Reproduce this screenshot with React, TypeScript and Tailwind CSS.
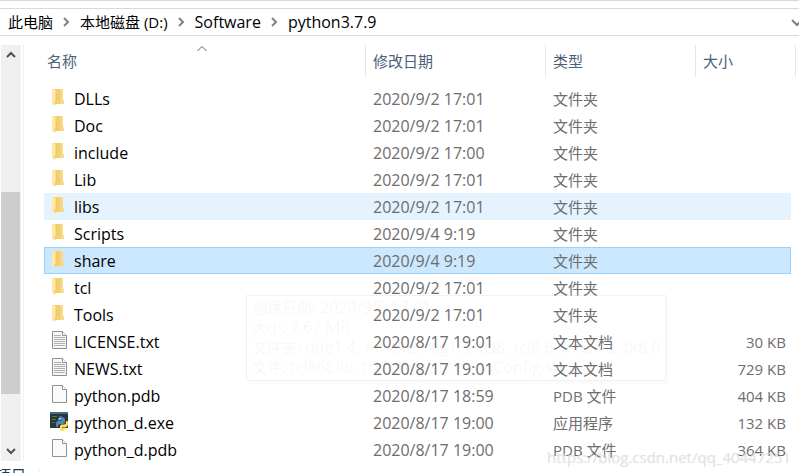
import React from "react";

type Kind = "folder" | "text" | "blank" | "python";
type Entry = { name: string; date: string; type: string; size?: string; kind: Kind };

const path = ["此电脑", "本地磁盘 (D:)", "Software", "python3.7.9"];

const entries: Entry[] = [
  { name: "DLLs", date: "2020/9/2 17:01", type: "文件夹", kind: "folder" },
  { name: "Doc", date: "2020/9/2 17:01", type: "文件夹", kind: "folder" },
  { name: "include", date: "2020/9/2 17:00", type: "文件夹", kind: "folder" },
  { name: "Lib", date: "2020/9/2 17:01", type: "文件夹", kind: "folder" },
  { name: "libs", date: "2020/9/2 17:01", type: "文件夹", kind: "folder" },
  { name: "Scripts", date: "2020/9/4 9:19", type: "文件夹", kind: "folder" },
  { name: "share", date: "2020/9/4 9:19", type: "文件夹", kind: "folder" },
  { name: "tcl", date: "2020/9/2 17:01", type: "文件夹", kind: "folder" },
  { name: "Tools", date: "2020/9/2 17:01", type: "文件夹", kind: "folder" },
  { name: "LICENSE.txt", date: "2020/8/17 19:01", type: "文本文档", size: "30 KB", kind: "text" },
  { name: "NEWS.txt", date: "2020/8/17 19:01", type: "文本文档", size: "729 KB", kind: "text" },
  { name: "python.pdb", date: "2020/8/17 18:59", type: "PDB 文件", size: "404 KB", kind: "blank" },
  { name: "python_d.exe", date: "2020/8/17 19:00", type: "应用程序", size: "132 KB", kind: "python" },
  { name: "python_d.pdb", date: "2020/8/17 19:00", type: "PDB 文件", size: "364 KB", kind: "blank" },
];

const details = [
  { label: "创建日期:", value: "2020/9/2 17:01" },
  { label: "大小:", value: "7.67 MB" },
  { label: "文件夹:", value: "dde1.4, nmake, reg1.3, tcl8, tcl8.6, tix8.4.3, tk8.6" },
  { label: "文件:", value: "tcl86t.lib, tclConfig.sh, tclooConfig.sh, ..." },
];

const HOVERED = "libs";
const SELECTED = "share";

function IconFrame({ children }: { children: React.ReactNode }) {
  return (
    <svg width="18" height="19" viewBox="0 2 18 19" className="shrink-0 overflow-visible" aria-hidden="true">
      {children}
    </svg>
  );
}

function FolderIcon() {
  return (
    <IconFrame>
      <path d="M4 2h9v11l1 1v3H4z" fill="#f3cf6f" />
      <path d="M10.500 2H13v11l1 1v3h-3.500z" fill="#f7da8a" />
      <path d="M2 2h2l2 2v10l-1 1v4l-3-2z" fill="#ffe8a6" />
      <path d="M6 4v10l-1 1v3" fill="none" stroke="#e6bf60" strokeWidth=".6" />
    </IconFrame>
  );
}

function PageIcon({ lined }: { lined?: boolean }) {
  return (
    <IconFrame>
      <path d="M2.500 1.500h10l4 4v13h-14z" fill={lined ? "#f7f7f7" : "#fafafa"} stroke="#909090" />
      <path d="M12.500 1.500v4h4" fill="#fff" stroke="#909090" />
      {lined && <path d="M4 5.500h7M4 7.500h11M4 9.500h11M4 11.500h11M4 13.500h11M4 15.500h11" stroke="#b0b0b0" />}
    </IconFrame>
  );
}

function PythonIcon() {
  return (
    <IconFrame>
      <path d="M0 1h18v16H0z" fill="#2d3338" />
      <path d="M0 1h18v2H0z" fill="#426b86" />
      <path d="M2 5.500h5M9 5.500h3M2 8.500h4M2 11.500h3" stroke="#3f7d3f" />
      <path d="M8 9c0-2 1-3 3.500-3S15 7 15 9v2c0 1-1 2-2 2h-3c-1 0-2 1-2 2v1H7c-1 0-1-1-1-3s1-3 2-3h4V9.500H8z" fill="#4b8bc2" />
      <path d="M16 10h1c1 0 1 1 1 3s-1 3-2 3h-4v.500h4v.500c0 2-1 3-3 3s-3-1-3-3v-2c0-1 1-1.500 2-1.500h2c1 0 2-1 2-2z" fill="#ffd94f" />
      <circle cx="9.800" cy="7.800" r=".7" fill="#fff" />
      <circle cx="14.500" cy="18.200" r=".6" fill="#fff" />
    </IconFrame>
  );
}

function EntryIcon({ kind }: { kind: Kind }) {
  if (kind === "folder") return <FolderIcon />;
  if (kind === "python") return <PythonIcon />;
  return <PageIcon lined={kind === "text"} />;
}

function Chevron({ d, className, width = 2 }: { d: string; className: string; width?: number }) {
  return (
    <svg width="12" height="12" viewBox="0 0 12 12" className={className} aria-hidden="true">
      <path d={d} fill="none" stroke="currentColor" strokeWidth={width} />
    </svg>
  );
}

function AddressBar() {
  return (
    <header className="shrink-0 border-t border-[#d9d9d9] pt-[7px]">
      <nav aria-label="路径" className="flex h-7 items-center justify-between border-y border-[#d9d9d9] pl-2">
        <ol className="flex items-center">
          {path.map((part, i) => (
            <li key={part} className="flex items-center whitespace-nowrap">
              {i > 0 && <Chevron d="M4 2l4 4-4 4" className="mr-2 ml-[7px] text-[#808080]" />}
              <button type="button" className={i > 1 ? "text-base leading-5" : "text-[15px] leading-5"}>
                {part}
              </button>
            </li>
          ))}
        </ol>
        <button type="button" aria-label="以前的位置" className="-mr-1">
          <Chevron d="M1 4l5 5 5-5" className="text-[#808080]" width={2} />
        </button>
      </nav>
    </header>
  );
}

function ScrollBar() {
  return (
    <div className="ml-px flex w-5 shrink-0 flex-col bg-[#f0f0f0] pr-px text-[#505050]">
      <button type="button" aria-label="向上滚动" className="flex h-5 items-center justify-center">
        <Chevron d="M2 8l4-4 4 4" className="" width={2} />
      </button>
      <div className="flex flex-1 flex-col">
        <div className="basis-[127px]" />
        <div className="basis-[202px] bg-[#cdcdcd]" />
      </div>
      <button type="button" aria-label="向下滚动" className="flex h-5 items-center justify-center">
        <Chevron d="M2 4l4 4 4-4" className="" width={2} />
      </button>
    </div>
  );
}

function rowCell(name: string) {
  if (name === SELECTED) return "border-y border-[#99d1ff] bg-[#cce8ff]";
  if (name === HOVERED) return "border-y border-[#e5f3ff] bg-[#e5f3ff]";
  return "border-y border-transparent";
}

function FileTable() {
  const head = "border-r border-[#e5e5e5] p-0 pl-[7px] text-[15px] font-normal";
  return (
    <table className="w-full table-fixed border-separate border-spacing-0 text-left">
      <colgroup>
        <col />
        <col className="w-[180px]" />
        <col className="w-[150px]" />
        <col className="w-[95px]" />
        <col className="w-[5px]" />
      </colgroup>
      <thead>
        <tr className="h-8 text-[#4c607a]">
          <th scope="col" aria-sort="ascending" className="relative border-r border-[#e5e5e5] p-0 pl-[3px] text-[15px] font-normal">
            名称
            <Chevron d="M1.500 8l4.500-4.500 4.500 4.500" className="absolute -top-0.5 left-1/2 -ml-2 text-[#606060]" width={1} />
          </th>
          <th scope="col" className={head}>修改日期</th>
          <th scope="col" className={head}>类型</th>
          <th scope="col" colSpan={2} className={head}>大小</th>
        </tr>
        <tr className="h-2"><td colSpan={5} className="p-0" /></tr>
      </thead>
      <tbody>
        {entries.map((e) => {
          const cell = rowCell(e.name);
          return (
            <tr key={e.name} className="h-[27px] text-base leading-5 whitespace-nowrap text-[#6d6d6d]">
              <td className={cell + " border-l p-0 pl-[5px] text-black"}>
                <div className="flex items-center gap-1.5">
                  <EntryIcon kind={e.kind} />
                  <span>{e.name}</span>
                </div>
              </td>
              <td className={cell + " p-0 pl-[7px]"}>{e.date}</td>
              <td className={cell + " p-0 pl-[7px] text-[15px]"}>{e.type}</td>
              <td className={cell + " border-r p-0 pr-1 text-right text-[15px]"}>{e.size}</td>
              <td className="p-0" />
            </tr>
          );
        })}
      </tbody>
    </table>
  );
}

function FolderTooltip() {
  return (
    <div role="tooltip" className="pointer-events-none absolute top-[250px] left-[202px] h-[86px] w-[420px] overflow-hidden border border-black/5 px-[5px] py-px leading-5 whitespace-nowrap text-black/5 shadow-[3px_3px_3px_rgba(0,0,0,0.02)]">
      {details.map((d) => (
        <p key={d.label} className="flex h-5 gap-1">
          <span className="text-[15px]">{d.label}</span>
          <span className="text-base leading-5">{d.value}</span>
        </p>
      ))}
    </div>
  );
}

export default function App() {
  return (
    <div className="relative flex h-screen flex-col overflow-hidden bg-white font-['Open_Sans','Noto_Sans_CJK_SC',sans-serif] text-black">
      <AddressBar />
      <main className="flex min-h-0 flex-1 pt-[9px]">
        <ScrollBar />
        <div className="ml-0.5 w-px shrink-0 bg-[#f3f3f3]" />
        <div className="relative ml-5 min-w-0 flex-1 pr-[3px]">
          <FileTable />
          <FolderTooltip />
        </div>
      </main>
      <footer className="flex h-3 shrink-0 overflow-hidden bg-white pt-1 text-[15px] leading-5 text-[#1e395b]">
        <span className="-ml-1 w-[43px]">项目</span>
        <span className="mt-1 h-1 w-px bg-[#f0f0f0]" />
      </footer>
      <p className="pointer-events-none absolute right-2 bottom-1.5 text-[15px] leading-5 text-[#e4e4e4]/80 [text-shadow:0_0_1px_rgba(0,0,0,0.12)]">
        https://blog.csdn.net/qq_40447251
      </p>
    </div>
  );
}
